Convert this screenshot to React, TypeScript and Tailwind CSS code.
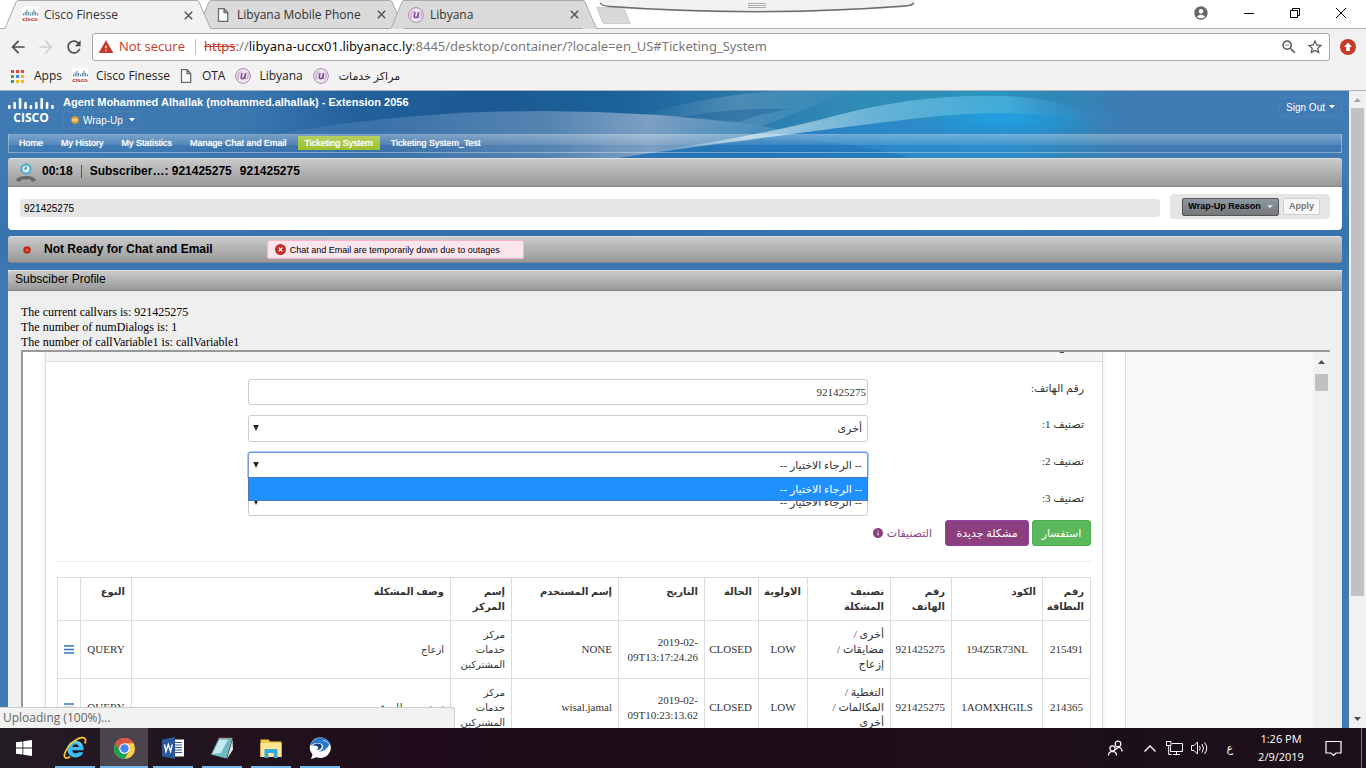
import React from "react";
import {
  MdAccountCircle,
  MdArrowBack,
  MdArrowForward,
  MdInfo,
  MdRefresh,
  MdStarBorder,
  MdWarning,
  MdZoomOut,
} from "react-icons/md";

const ui = "font-['Open_Sans','DejaVu_Sans',sans-serif]";
const sans = "font-['Liberation_Sans',Arial,sans-serif]";
const serif = "font-['Liberation_Serif','DejaVu_Sans',serif]";

/* ---------- small drawings ---------- */

function CiscoBars() {
  const bars = [
    [0, 8, 4],
    [1, 5, 7],
    [2, 1, 11],
    [3, 5, 7],
    [4, 8, 4],
    [5, 5, 7],
    [6, 1, 11],
    [7, 5, 7],
    [8, 8, 4],
  ];
  return (
    <g>
      {bars.map(([i, y, h]) => (
        <rect key={i} x={i * 5.4} y={y} width="2.6" height={h} rx="1" />
      ))}
    </g>
  );
}

function CiscoFavicon() {
  return (
    <span className={`flex size-4 shrink-0 flex-col items-center justify-center bg-white ${sans}`} aria-hidden="true">
      <svg viewBox="0 0 46 13" preserveAspectRatio="none" className="h-[7px] w-[15px] fill-[#2f6b86]">
        <CiscoBars />
      </svg>
      <span className="text-[6px] leading-[6px] font-bold text-[#a5182b]">cisco</span>
    </span>
  );
}

function LibyanaIcon() {
  return (
    <svg viewBox="0 0 16 16" className="size-4 shrink-0" fill="none" aria-hidden="true">
      <circle cx="8" cy="8" r="7.4" fill="#efe6f0" stroke="#a57fae" strokeWidth=".9" />
      <path d="M3.500 11.500C2.500 7.500 4 4.500 6 3.500" stroke="#cdb6d2" strokeWidth="1.8" />
      <path d="M7 5 6.200 9.200c-.3 1.800 2.600 1.800 3.400.2L10.600 5M10.300 7l-.6 4" stroke="#8a4f99" strokeWidth="1.700" />
      <path d="M12.800 4.600c.9 2 .5 5-1.300 6.900" stroke="#b994c2" />
    </svg>
  );
}

function PageIcon() {
  return (
    <svg viewBox="0 0 16 16" className="size-4 shrink-0" fill="#fbfbfb" stroke="#6b6b6b" strokeWidth="1.3" aria-hidden="true">
      <path d="M3.500 1.700h5.600l3.600 3.700v9H3.500zM9 1.700v3.800h3.700" />
    </svg>
  );
}

function AppsIcon() {
  const colors = ["#ea4335", "#ea4335", "#ea4335", "#34a853", "#4285f4", "#fbbc05", "#34a853", "#fbbc05", "#fbbc05"];
  return (
    <svg viewBox="0 0 13 13" className="size-[13px]" aria-hidden="true">
      {colors.map((c, i) => (
        <rect key={i} x={(i % 3) * 5} y={Math.floor(i / 3) * 5} width="3" height="3" fill={c} />
      ))}
    </svg>
  );
}

/* ---------- browser chrome ---------- */

function Tab({ title, icon, active = false }: { title: string; icon: React.ReactNode; active?: boolean }) {
  const fill = active ? "#f2f2f2" : "#dadada";
  return (
    <div className={`-mr-[13px] flex h-[29px] w-[206px] shrink-0 ${active ? "relative z-10" : ""}`}>
      <svg viewBox="0 0 13 29" className="h-full w-[13px] shrink-0" aria-hidden="true">
        <path d="M0 28.500 11 2Q11.600 .5 13 .5V29H0z" fill={fill} />
        <path d="M0 28.500 11 2Q11.600 .5 13 .5" fill="none" stroke="#a9a9a9" />
      </svg>
      <div
        className={`flex min-w-0 flex-1 items-center border-t border-[#a9a9a9] px-1 text-[12px] text-[#333] ${
          active ? "bg-[#f2f2f2]" : "border-b bg-[#dadada]"
        }`}
      >
        {icon}
        <span className="ml-1.5 flex-1 truncate">{title}</span>
        <button aria-label={`Close ${title}`}>
          <svg viewBox="0 0 9 9" className="size-[9px]" stroke="#5a5a5a" strokeWidth="1.6">
            <path d="m.8.8 7.400 7.400M8.200.8.8 8.200" />
          </svg>
        </button>
      </div>
      <svg viewBox="0 0 14 29" className="h-full w-[14px] shrink-0" aria-hidden="true">
        <path d="M0 .5Q1.400.5 2 2L13.500 28.500V29H0z" fill={fill} />
        <path d="M0 .5Q1.400.5 2 2L13.500 28.500" fill="none" stroke="#a9a9a9" />
      </svg>
    </div>
  );
}

function TabStrip() {
  return (
    <div className="relative flex h-[29px] shrink-0 border-b border-[#b1b1b1] bg-white pl-[5px]">
      <Tab title="Cisco Finesse" icon={<CiscoFavicon />} active />
      <Tab title="Libyana Mobile Phone" icon={<PageIcon />} />
      <Tab title="Libyana" icon={<LibyanaIcon />} />
      <button aria-label="New tab" className="mt-[7px] ml-3 h-[18px]">
        <svg viewBox="0 0 36 18" className="h-[18px] w-9">
          <path d="M.8.500h25.500q1.500 0 2 1.500l6 14.500H8.500q-1.500 0-2-1.500z" fill="#d8d8d8" stroke="#cdcdcd" />
        </svg>
      </button>
      <svg viewBox="0 0 316 15" className="absolute top-0 left-[599px] h-[15px] w-[316px]" aria-hidden="true">
        <path d="M0 0h316q-2 6-10 7Q158 18 10 7.500 2 6 0 0z" fill="#d0d0d0" />
        <path d="M0 0h316q-2 5-11 5.500Q158 16 11 6 2 5 0 0z" fill="#f2f2f2" />
        <path d="M1 3q2 3 10 3.500Q158 17 306 6q7-.5 9-3" fill="none" stroke="#6c6c6c" strokeWidth="1.300" />
        <path d="M149 3.500h18M149 5.500h18M149 7.500h18" stroke="#aaa" />
      </svg>
      <div className="ml-auto flex items-start pt-[5px] pr-5">
        <button aria-label="Account" className="mr-[35px]">
          <MdAccountCircle className="size-4 text-[#666]" />
        </button>
        <button aria-label="Minimize" className="mr-9">
          <svg viewBox="0 0 10 16" className="h-4 w-2.5" stroke="#000">
            <path d="M0 8.500h10" />
          </svg>
        </button>
        <button aria-label="Restore" className="mr-9">
          <svg viewBox="0 0 10 16" className="h-4 w-2.5" stroke="#000" fill="none">
            <path d="M.5 5.500h7v7h-7zM2.500 5.500v-2h7v7h-2" />
          </svg>
        </button>
        <button aria-label="Close window">
          <svg viewBox="0 0 10 16" className="h-4 w-2.5" stroke="#000" fill="none">
            <path d="m0 3 10 10M10 3 0 13" />
          </svg>
        </button>
      </div>
    </div>
  );
}

function Toolbar() {
  return (
    <div className="flex h-9 shrink-0 items-center bg-[#f2f2f2] pr-2.5 pl-2">
      <button aria-label="Back">
        <MdArrowBack className="size-5 text-[#4d4d4d]" />
      </button>
      <button aria-label="Forward" className="ml-2">
        <MdArrowForward className="size-5 text-[#cfcfcf]" />
      </button>
      <button aria-label="Reload" className="ml-2">
        <MdRefresh className="size-5 text-[#4d4d4d]" />
      </button>
      <div className="ml-2 flex h-7 min-w-0 flex-1 items-center rounded-[3px] border border-[#a9a9a9] bg-white px-[5px] text-[13px]">
        <MdWarning className="size-4 shrink-0 text-[#c53929]" />
        <span className="ml-[5px] text-[#c53929]">Not secure</span>
        <span className="mr-2 ml-2.5 h-4 w-px bg-[#c0c0c0]" />
        <div
          role="textbox"
          aria-label="Address"
          contentEditable
          suppressContentEditableWarning
          className="flex-1 truncate font-['Noto_Sans',sans-serif] text-[#777] outline-none"
        >
          <span className="text-[#c53929] line-through">https</span>://
          <span className="text-[#111]">libyana-uccx01.libyanacc.ly</span>:8445/desktop/container/?locale=en_US#Ticketing_System
        </div>
        <button aria-label="Zoom">
          <MdZoomOut className="size-[18px] text-[#555]" />
        </button>
        <button aria-label="Bookmark this page" className="ml-2">
          <MdStarBorder className="size-[18px] text-[#555]" />
        </button>
      </div>
      <button aria-label="Update" className="ml-2.5">
        <svg viewBox="0 0 16 16" className="size-4">
          <circle cx="8" cy="8" r="8" fill="#c53929" />
          <path d="m8 3.500 4 4.500H9.800v4H6.200V8H4z" fill="#fff" />
        </svg>
      </button>
    </div>
  );
}

function Bookmarks() {
  return (
    <nav className="flex h-[26px] shrink-0 items-center border-b border-[#b1b1b1] bg-[#f2f2f2] pb-[3px] pl-[11px] text-[12px] text-[#222]">
      <a href="#apps" className="flex items-center gap-2.5">
        <AppsIcon /> Apps
      </a>
      <a href="#finesse" className="ml-2.5 flex items-center gap-2">
        <CiscoFavicon /> Cisco Finesse
      </a>
      <a href="#ota" className="ml-2 flex items-center gap-2">
        <PageIcon /> OTA
      </a>
      <a href="#libyana" className="ml-2.5 flex items-center gap-2">
        <LibyanaIcon /> Libyana
      </a>
      <a href="#centers" className="ml-2.5 flex items-center gap-2.5">
        <LibyanaIcon /> <span className="text-[11px]">مراكز خدمات</span>
      </a>
    </nav>
  );
}

/* ---------- agent desktop ---------- */

function Banner() {
  return (
    <svg viewBox="0 0 1349 200" preserveAspectRatio="none" className="absolute inset-x-0 top-0 h-[200px] w-full" aria-hidden="true">
      <defs>
        <linearGradient id="base" x1="0" x2="1">
          <stop offset="0" stopColor="#407bb4" />
          <stop offset=".18" stopColor="#3c77b0" />
          <stop offset=".27" stopColor="#22609b" />
          <stop offset=".36" stopColor="#1b5993" />
          <stop offset=".46" stopColor="#1b6299" />
          <stop offset=".54" stopColor="#2876a8" />
          <stop offset=".62" stopColor="#3089b6" />
          <stop offset=".74" stopColor="#2b95bd" />
          <stop offset=".79" stopColor="#2f86b4" />
          <stop offset=".84" stopColor="#407bb4" />
        </linearGradient>
        <linearGradient id="haze" gradientUnits="userSpaceOnUse" x1="200" x2="900" y1="0" y2="0">
          <stop offset="0" stopColor="#3d77b0" />
          <stop offset=".25" stopColor="#3b72aa" />
          <stop offset=".5" stopColor="#5584b1" />
          <stop offset=".64" stopColor="#7c9fc3" />
          <stop offset=".8" stopColor="#4f93c0" stopOpacity=".8" />
          <stop offset="1" stopColor="#3a86c4" stopOpacity="0" />
        </linearGradient>
        <linearGradient id="veil" gradientUnits="userSpaceOnUse" x1="640" x2="840" y1="0" y2="0">
          <stop offset="0" stopColor="#5d93bb" stopOpacity="0" />
          <stop offset=".5" stopColor="#5d93bb" stopOpacity=".7" />
          <stop offset="1" stopColor="#4597bd" stopOpacity=".3" />
        </linearGradient>
        <linearGradient id="sweep" gradientUnits="userSpaceOnUse" x1="590" x2="1110" y1="0" y2="0">
          <stop offset="0" stopColor="#a9c3da" stopOpacity="0" />
          <stop offset=".3" stopColor="#b4d3e4" stopOpacity=".9" />
          <stop offset=".55" stopColor="#6db6d9" stopOpacity=".9" />
          <stop offset=".8" stopColor="#45b1dc" stopOpacity=".8" />
          <stop offset="1" stopColor="#407bb4" stopOpacity="0" />
        </linearGradient>
        <linearGradient id="deep" gradientUnits="userSpaceOnUse" x1="600" x2="1120" y1="0" y2="0">
          <stop offset="0" stopColor="#3a75b0" />
          <stop offset=".3" stopColor="#2a7cbc" />
          <stop offset=".6" stopColor="#2b8bca" />
          <stop offset=".8" stopColor="#2c8ccb" stopOpacity=".9" />
          <stop offset="1" stopColor="#407bb4" stopOpacity="0" />
        </linearGradient>
        <radialGradient id="glow">
          <stop offset="0" stopColor="#1fa2e6" />
          <stop offset=".5" stopColor="#2395d6" stopOpacity=".6" />
          <stop offset="1" stopColor="#407bb4" stopOpacity="0" />
        </radialGradient>
        <linearGradient id="fade" x2="0" y2="1">
          <stop offset=".35" stopColor="#3874ae" stopOpacity="0" />
          <stop offset=".75" stopColor="#3672ac" />
          <stop offset="1" stopColor="#407bb4" />
        </linearGradient>
      </defs>
      <rect width="1349" height="200" fill="url(#base)" />
      <path d="M600 34Q720 0 790 0h60l-90 36z" fill="url(#veil)" />
      <path d="M200 60Q360 20 544 20 650 20 755 34 830 45 900 70H200z" fill="url(#haze)" />
      <path d="M680 26q60-10 110-8-30 4-50 13z" fill="#1f659d" opacity=".5" />
      <path d="M600 70Q730 48 838 34q140-16 290 20V90H600z" fill="url(#deep)" />
      <path d="M748 48Q840 46 914 68V90H620V66z" fill="#2273b5" opacity=".6" />
      <ellipse cx="1005" cy="28" rx="125" ry="26" fill="url(#glow)" />
      <path d="M590 70Q755 47 838 24 920 3 1000 5q70 2 110 28-90-18-190-6-70 8-172 22-80 10-140 20z" fill="url(#sweep)" />
      <rect width="1349" height="200" fill="url(#fade)" />
    </svg>
  );
}

function DownCaret({ className = "" }: { className?: string }) {
  return (
    <svg viewBox="0 0 6 4" className={`h-1 w-1.5 ${className}`} fill="currentColor" aria-hidden="true">
      <path d="M0 0h6L3 3.500z" />
    </svg>
  );
}

function AgentHeader() {
  return (
    <header className="flex h-[43px] items-start text-white">
      <div className="mt-1.5 flex w-[46px] flex-col items-center">
        <svg viewBox="0 0 46 13" className="h-[13px] w-[46px] fill-white" aria-hidden="true">
          <CiscoBars />
        </svg>
        <span className="font-['Open_Sans',sans-serif] text-[12px] leading-[15px] font-bold">CISCO</span>
      </div>
      <div className="ml-[9px] pt-[5px]">
        <h1 className="text-[11px] leading-[13px] font-bold">Agent Mohammed Alhallak (mohammed.alhallak) - Extension 2056</h1>
        <button className="mt-0.5 flex h-[18px] w-[76px] items-center rounded border border-white/5 pl-[7px] text-[10px]">
          <svg viewBox="0 0 8 8" className="size-2" aria-hidden="true">
            <circle cx="4" cy="4" r="3.700" fill="#f0a21d" />
            <path d="M1.500 4h5" stroke="#fff3cf" strokeWidth="1.400" />
          </svg>
          <span className="ml-1">Wrap-Up</span>
          <DownCaret className="ml-1.5" />
        </button>
      </div>
      <button className="mt-1.5 ml-auto flex h-5 items-center gap-1 rounded border border-white/5 px-1.5 text-[10px]">
        Sign Out <DownCaret />
      </button>
    </header>
  );
}

const navItems = ["Home", "My History", "My Statistics", "Manage Chat and Email", "Ticketing System", "Ticketing System_Test"];

function MainNav() {
  return (
    <nav className="flex h-[19px] items-start border border-t-white/35 border-r-white/35 border-b-white/10 border-l-white/35 bg-gradient-to-b from-white/30 via-white/10 via-60% to-transparent to-60% pt-px pl-[3px] text-[9px] leading-[14px] text-white">
      {navItems.map((item) => (
        <a
          key={item}
          href="#"
          className={`mr-1 px-[7px] [text-shadow:0_0_1px_#fff] ${
            item === "Ticketing System" ? "bg-gradient-to-b from-[#b5d05f] to-[#9bbf25]" : ""
          }`}
        >
          {item}
        </a>
      ))}
    </nav>
  );
}

const bar = "flex items-center border-t border-b border-t-[#dedede] border-b-[#858585] bg-gradient-to-b from-[#cacaca] to-[#999] text-black";

function CallPanel() {
  return (
    <section className="mt-[5px]">
      <div className={`${bar} h-[29px] rounded-t-[3px] pb-[3px] pl-2 text-[12px] font-bold`}>
        <svg viewBox="0 0 20 20" className="mt-[3px] size-5" aria-hidden="true">
          <circle cx="10" cy="6" r="4.600" fill="#d4eef5" stroke="#4fb0cc" strokeWidth="2.200" />
          <path d="M10 3.500V6H8.500" stroke="#444" fill="none" />
          <path d="M0 17.500Q1 13 10 13t10 4.500l-4 1.500-1.500-2.500h-9L4 19z" fill="#686868" />
        </svg>
        <span className="ml-1.5">00:18</span>
        <span className="ml-2 h-[13px] w-px bg-[#555]" />
        <span className="ml-2">Subscriber…: 921425275</span>
        <span className="ml-2">921425275</span>
      </div>
      <div className="flex h-[43px] items-start rounded-b bg-white px-3 pt-[7px]">
        <input
          aria-label="Call variable"
          defaultValue="921425275"
          className="mt-[5px] h-[18px] min-w-0 flex-1 rounded bg-[#e5e5e5] px-1 pt-px text-[10px] text-black"
        />
        <div className="ml-2.5 flex h-[25px] items-center rounded bg-[#e5e5e5] pr-2.5 pl-3 text-[9px] font-bold">
          <button className="flex h-[18px] w-[97px] items-center justify-center gap-1.5 rounded-xs border border-[#555] bg-gradient-to-b from-[#8b98a5] to-[#777] text-black">
            Wrap-Up Reason
            <DownCaret className="text-[#ccd9e8]" />
          </button>
          <button disabled className="ml-1 h-[17px] w-[37px] rounded-xs border border-[#cfcfcf] bg-[#f6f6f6] text-[#777]">
            Apply
          </button>
        </div>
      </div>
    </section>
  );
}

function ChatBar() {
  return (
    <section className={`${bar} mt-1.5 h-[27px] rounded-[3px] pl-[15px]`}>
      <svg viewBox="0 0 8 8" className="size-2" aria-hidden="true">
        <circle cx="4" cy="4" r="3.700" fill="#bd2a18" />
        <circle cx="4" cy="4" r="1.500" fill="#e8604a" />
      </svg>
      <span className="ml-[13px] pb-0.5 text-[12px] font-bold">Not Ready for Chat and Email</span>
      <div role="alert" className="ml-[54px] flex h-[19px] w-[257px] items-center rounded-xs border border-[#fbb3c8] bg-[#fbe6ee] pl-[7px] text-[9px]">
        <svg viewBox="0 0 12 12" className="size-[11px]" aria-hidden="true">
          <circle cx="6" cy="6" r="6" fill="#c0312b" />
          <path d="m4 4 4 4m0-4L4 8" stroke="#fff" strokeWidth="1.400" />
        </svg>
        <span className="ml-1 pt-0.5">Chat and Email are temporarily down due to outages</span>
      </div>
    </section>
  );
}

/* ---------- ticketing form ---------- */

function SelectField({ id, label, value, open = false }: { id: string; label: string; value: string; open?: boolean }) {
  return (
    <div className="flex items-start">
      <label htmlFor={id} className="w-[216px] shrink-0 leading-[19px]">
        {label}
      </label>
      <div className="relative flex-1">
        <select
          id={id}
          defaultValue={value}
          className={`block h-[27px] w-full appearance-none rounded-[3px] border bg-white px-[5px] leading-[19px] ${
            open ? "border-[#6f9bdc] ring-1 ring-[#a9c9f7]" : "border-[#ccc]"
          }`}
        >
          <option value={value}>{value}</option>
        </select>
        <svg viewBox="0 0 6 7" className="pointer-events-none absolute top-2.5 left-[5px] h-[7px] w-1.5" aria-hidden="true">
          <path d="M.2 0h5.600L3 6z" fill="#222" />
        </svg>
        {open && (
          <ul role="listbox" aria-label={label} className="absolute top-[25px] right-0 left-0 z-10 border border-[#4b79b5] bg-[#1e90ff] text-white">
            <li role="option" aria-selected="true" className="h-[22px] px-[5px] leading-[22px]">
              {value}
            </li>
          </ul>
        )}
      </div>
    </div>
  );
}

const choose = "-- الرجاء الاختيار --";

function TicketForm() {
  return (
    <form className="flex flex-col gap-2.5 pt-[17px] pr-[18px] pl-[202px]" onSubmit={(e) => e.preventDefault()}>
      <div className="flex items-start">
        <label htmlFor="phone" className="w-[216px] shrink-0 leading-[19px]">
          رقم الهاتف:
        </label>
        <input id="phone" defaultValue="921425275" className="h-[26px] min-w-0 flex-1 rounded-[3px] border border-[#ccc] px-px text-[11px]" />
      </div>
      <SelectField id="class1" label="تصنيف 1:" value="أخرى" />
      <SelectField id="class2" label="تصنيف 2:" value={choose} open />
      <SelectField id="class3" label="تصنيف 3:" value={choose} />
    </form>
  );
}

type Ticket = {
  id: string;
  code: string;
  phone: string;
  category: string[];
  date: string[];
  user: string;
  description: string;
};

const tickets: Ticket[] = [
  {
    id: "215491",
    code: "194Z5R73NL",
    phone: "921425275",
    category: ["أخرى /", "مضايقات /", "إزعاج"],
    date: ["2019-02-", "09T13:17:24.26"],
    user: "NONE",
    description: "ازعاج",
  },
  {
    id: "214365",
    code: "1AOMXHGILS",
    phone: "921425275",
    category: ["التغطية /", "المكالمات /", "أخرى"],
    date: ["2019-02-", "09T10:23:13.62"],
    user: "wisal.jamal",
    description: "تم توجيهه للموقع",
  },
];

const td = "border border-[#ddd] px-1.5 py-1.5";

function Lines({ items }: { items: string[] }) {
  return (
    <>
      {items.map((t) => (
        <div key={t} className="whitespace-nowrap">
          {t}
        </div>
      ))}
    </>
  );
}

function TicketTable() {
  const th = `${td} text-right align-top font-bold text-[10px]`;
  return (
    <table className="mt-[15px] w-full table-fixed border-collapse text-[11px] leading-[15px]">
      <colgroup>
        <col className="w-12" />
        <col className="w-[91px]" />
        <col className="w-[61px]" />
        <col className="w-[83px]" />
        <col className="w-[49px]" />
        <col className="w-[54px]" />
        <col className="w-[86px]" />
        <col className="w-[107px]" />
        <col className="w-[61px]" />
        <col />
        <col className="w-[51px]" />
        <col className="w-[23px]" />
      </colgroup>
      <thead>
        <tr>
          <th className={th}><Lines items={["رقم", "البطاقة"]} /></th>
          <th className={th}>الكود</th>
          <th className={th}><Lines items={["رقم", "الهاتف"]} /></th>
          <th className={th}><Lines items={["تصنيف", "المشكلة"]} /></th>
          <th className={th}>الاولوية</th>
          <th className={th}>الحالة</th>
          <th className={th}>التاريخ</th>
          <th className={th}>إسم المستخدم</th>
          <th className={th}><Lines items={["إسم", "المركز"]} /></th>
          <th className={th}>وصف المشكلة</th>
          <th className={th}>النوع</th>
          <th className={td} aria-label="القائمة" />
        </tr>
      </thead>
      <tbody>
        {tickets.map((t) => (
          <tr key={t.id}>
            <td className={`${td} text-center`}>{t.id}</td>
            <td className={`${td} text-center`}>{t.code}</td>
            <td className={`${td} text-center`}>{t.phone}</td>
            <td className={td}><Lines items={t.category} /></td>
            <td className={`${td} text-center`}>LOW</td>
            <td className={`${td} text-center`}>CLOSED</td>
            <td className={td}><bdi dir="ltr" className="block text-right"><Lines items={t.date} /></bdi></td>
            <td className={td}>{t.user}</td>
            <td className={`${td} text-[10px]`}><Lines items={["مركز", "خدمات", "المشتركين"]} /></td>
            <td className={`${td} text-[10px]`}>{t.description}</td>
            <td className={`${td} text-center`}>QUERY</td>
            <td className={`${td} text-center`}>
              <button aria-label="التفاصيل" className="block">
                <svg viewBox="0 0 10 9" className="h-[9px] w-2.5" stroke="#337ab7" strokeWidth="1.300">
                  <path d="M0 1h10M0 4.500h10M0 8h10" />
                </svg>
              </button>
            </td>
          </tr>
        ))}
      </tbody>
    </table>
  );
}

function UpArrow({ color }: { color: string }) {
  return (
    <svg viewBox="0 0 7 4" className="h-1 w-[7px]" fill={color} aria-hidden="true">
      <path d="M0 4h7L3.500 0z" />
    </svg>
  );
}

function TicketFrame() {
  return (
    <div className={`mr-3 ml-[13px] flex min-h-0 flex-1 overflow-hidden border-t-2 border-l-2 border-[#999] bg-white text-[11px] text-[#333] ${serif}`}>
      <div className="flex min-w-0 flex-1">
        <div dir="rtl" className="mx-[22px] min-w-0 flex-1 border-x border-[#ddd] shadow-[0_0_3px_#ddd]">
          <div className="flex h-2.5 items-end border-b border-[#ddd] bg-[#f5f5f5] pr-[38px] leading-[18px]">
            <span className="mb-1.5">ع</span>
          </div>
          <TicketForm />
          <div className="mt-1 flex items-center pr-[11px]">
            <button className="h-[26px] w-[59px] rounded-[3px] border border-[#4cae4c] bg-[#5cb85c] text-white">استفسار</button>
            <button className="mr-[3px] h-[26px] w-[84px] rounded-[3px] border border-[#8e44ad] bg-[#8c3f7f] text-white">مشكلة جديدة</button>
            <a href="#classes" className="mr-[13px] flex items-center gap-[3px] text-[#8c3f7f]">
              التصنيفات <MdInfo className="size-3" />
            </a>
          </div>
          <div className="mx-[11px] mt-[15px] border-t border-[#eee]">
            <TicketTable />
          </div>
        </div>
        <div className="w-[188px] shrink-0 border-l border-[#ddd] bg-[#f8f8f8]" />
      </div>
      <div className="flex w-[17px] shrink-0 flex-col items-center bg-[#f1f1f1] pt-2" aria-hidden="true">
        <UpArrow color="#505050" />
        <div className="mt-2.5 h-[17px] w-[13px] bg-[#c1c1c1]" />
      </div>
    </div>
  );
}

function ProfileGadget() {
  return (
    <section className="mt-[7px] flex min-h-0 flex-1 flex-col bg-[#efefef]">
      <h2 className={`${bar} h-[21px] shrink-0 rounded-t-[3px] pb-[3px] pl-[7px] text-[12px]`}>Subsciber Profile</h2>
      <div className={`mt-3.5 shrink-0 pl-[13px] text-[12px] leading-[15px] text-black ${serif}`}>
        <p>The current callvars is: 921425275</p>
        <p>The number of numDialogs is: 1</p>
        <p>The number of callVariable1 is: callVariable1</p>
      </div>
      <div className="flex min-h-0 flex-1">
        <TicketFrame />
      </div>
    </section>
  );
}

/* ---------- taskbar ---------- */

function TaskButton({ label, active = false, children }: { label: string; active?: boolean; children: React.ReactNode }) {
  return (
    <button aria-label={label} className={`relative mr-px flex h-10 w-12 items-center justify-center ${active ? "bg-[#4c454d]" : ""}`}>
      {children}
      <span className={`absolute bottom-0 h-0.5 bg-[#76b9ed] ${active ? "inset-x-0" : "inset-x-1"}`} />
    </button>
  );
}

function Taskbar() {
  return (
    <footer className={`flex h-10 shrink-0 items-center bg-gradient-to-r from-[#241c25] via-[#200c1a] via-30% to-[#1c1019] text-white ${ui}`}>
      <div className="flex">
        <button aria-label="Start" className="mr-[3px] flex h-10 w-12 items-center justify-center">
          <svg viewBox="0 0 16 16" className="size-4" fill="#fff">
            <path d="m0 2.300 6.500-.9v6.200H0zM7.300 1.300 16 0v7.600H7.300zM0 8.400h6.500v6.200L0 13.700zM7.300 8.400H16V16l-8.700-1.300z" />
          </svg>
        </button>
        <TaskButton label="Internet Explorer">
          <svg viewBox="0 0 24 24" className="size-6" fill="none">
            <path d="M20.300 16.200c-1.200 3.400-4.100 5.200-7.700 5.200-5 0-8.400-3.500-8.400-8.300 0-4.600 3.500-8.300 8.400-8.300 5 0 8.200 3.700 8 9.400H9.300c.3 2.200 1.500 3.200 3.500 3.200 1.300 0 2.300-.5 2.800-1.200zM9.400 10.900h6.300c-.2-1.700-1.300-2.700-3.100-2.700-1.700 0-2.800 1-3.200 2.700z" fill="#3cbdf3" fillRule="evenodd" />
            <path d="M5.500 10.500Q8 5.600 12.600 5.600q4.400 0 6.400 4" stroke="#9be3fb" strokeWidth="1" />
            <path d="M21.800 7.500C23.500 3.500 22.300 1 18.500 1.700 11 3.200 3 12 1.500 18.500c-.8 3.800 2 4.500 5.700 2.300" stroke="#f7c62b" strokeWidth="1.700" />
          </svg>
        </TaskButton>
        <TaskButton label="Chrome" active>
          <svg viewBox="0 0 24 24" className="size-[23px]">
            <circle cx="12" cy="12" r="11" fill="#ffcd42" />
            <path d="M2.500 6.500A11 11 0 0 1 21.500 6.500H12L7.200 14.800z" fill="#de5347" />
            <path d="M2.500 6.500 7.240 14.750Q9 17.500 12 17.500L16.760 14.750 12 23A11 11 0 0 1 2.500 6.500z" fill="#1a9f5d" />
            <circle cx="12" cy="12" r="5.500" fill="#fff" />
            <circle cx="12" cy="12" r="4.400" fill="#4486f5" />
          </svg>
        </TaskButton>
        <TaskButton label="Word">
          <svg viewBox="0 0 24 24" className="size-6">
            <path d="M12 3.500h11v17H12z" fill="#fff" />
            <path d="M14 6.500h7M14 9h7M14 11.500h7M14 14h7M14 16.500h7" stroke="#2b579a" />
            <path d="M1 3.500 14 1v22L1 20.500z" fill="#2b579a" />
            <path d="m3.500 8.500 1.500 7 2.300-7 2.300 7 1.600-7" stroke="#fff" strokeWidth="1.400" fill="none" />
          </svg>
        </TaskButton>
        <TaskButton label="Notepad">
          <svg viewBox="0 0 24 24" className="size-6">
            <path d="M8.500 3h13.700l-5.700 19.500L1 18.500z" fill="#6fb9c6" />
            <path d="M9.500 3.500H18L11 17 2.500 18z" fill="#c4eaf0" />
            <path d="m22.500 3.500.5 10-6 9.500z" fill="#e9e7dc" />
            <path d="M8.500 2.500h14" stroke="#999" strokeWidth="1.500" />
          </svg>
        </TaskButton>
        <TaskButton label="File Explorer">
          <svg viewBox="0 0 24 24" className="size-6">
            <path d="M1.500 3.500h8l1.500 2h11.500v15.500h-21z" fill="#f5c945" />
            <path d="M1.500 7h21v14h-21z" fill="#ffe594" />
            <path d="M5.500 22v-9h13v9h-3.700v-5H9.300v5z" fill="#35abe4" />
          </svg>
        </TaskButton>
        <TaskButton label="Jabber">
          <svg viewBox="0 0 24 24" className="size-6">
            <path d="M12.500 1.500A10.500 10.200 0 1 1 8.500 21.200L3 23l1.500-4.500A10.300 10.200 0 0 1 12.500 1.500z" fill="#fff" />
            <path d="M2.600 9.500C3.500 4.500 8 1.500 12.500 1.500c4 0 7.500 2 9.300 5.500-1.300 5-5.800 8.500-11.300 8.800 3.500-1.500 5-4 4.500-6C14.200 6.500 8 5.500 2.600 9.500z" fill="#2b78c9" />
            <path d="M4 9.500q5-3 8.500-1.300 2.500 1.800.3 4.300-1.500 1.500-4.300 1.700Q11.300 12 9.700 10.500 8 9.200 4 9.500z" fill="#123f86" />
            <path d="M15 4.500q4 0 5.500 3" stroke="#a8d0f2" fill="none" />
          </svg>
        </TaskButton>
      </div>
      <div className="ml-auto flex h-full items-center">
        <svg viewBox="0 0 16 16" className="size-4" fill="none" stroke="#fff" strokeWidth="1.200" aria-label="People">
          <circle cx="11" cy="4" r="2.800" />
          <path d="M8.500 9.500q5-5 6.800 2" />
          <circle cx="5.500" cy="8.500" r="2.600" />
          <path d="M1.500 15.500q0-4 4-4.200 4 .2 4 4.200" />
        </svg>
        <svg viewBox="0 0 12 7" className="ml-[21px] h-[7px] w-3" fill="none" stroke="#fff" strokeWidth="1.300" aria-label="Hidden icons">
          <path d="m.5 6.500 5.500-5.500 5.500 5.500" />
        </svg>
        <svg viewBox="0 0 17 16" className="ml-2.5 h-4 w-[17px]" fill="none" stroke="#fff" aria-label="Network">
          <path d="M6 3.500h10.500v8H4.500v-5M7 14.500h7M10.500 11.500v3M.5 1.500h4.500v4H.5zM2.700 5.500v9h3" />
        </svg>
        <svg viewBox="0 0 17 16" className="ml-2 h-4 w-[17px]" fill="none" stroke="#fff" aria-label="Volume">
          <path d="M.5 5.500h2.500l3.500-3.500v12L3 10.500H.5zM8.500 6q1.500 2 0 4.500M11 4q3 4 0 8.500M13.500 2.500q4.500 5.500 0 11.500" />
        </svg>
        <span className="ml-[18px] text-[11px]">ع</span>
        <div className="ml-4 w-16 text-center text-[11px] leading-[18px]">
          <div>1:26 PM</div>
          <div>2/9/2019</div>
        </div>
        <svg viewBox="0 0 17 17" className="ml-3 size-[17px]" fill="none" stroke="#fff" strokeWidth="1.200" aria-label="Notifications">
          <path d="M1 1.500h15v11.500h-5L8.500 15.500 6 13H1z" />
        </svg>
        <span className="ml-[19px] h-full w-[5px] border-l border-[#777]" />
      </div>
    </footer>
  );
}

export default function App() {
  return (
    <div className={`flex h-screen flex-col overflow-hidden ${ui}`}>
      <TabStrip />
      <Toolbar />
      <Bookmarks />
      <main className="relative flex min-h-0 flex-1">
        <div className={`relative flex min-w-0 flex-1 flex-col bg-[#407bb4] ${sans}`}>
          <Banner />
          <div className="relative flex min-h-0 flex-1 flex-col pr-[7px] pl-2">
            <AgentHeader />
            <MainNav />
            <CallPanel />
            <ChatBar />
            <ProfileGadget />
          </div>
        </div>
        <div className="flex w-[17px] shrink-0 flex-col items-center bg-[#f1f1f1] py-[7px]" aria-hidden="true">
          <UpArrow color="#a3a3a3" />
          <div className="mt-1.5 w-[13px] flex-1 bg-[#c1c1c1]" />
          <div className="flex flex-[0_0_20%] flex-col justify-end">
            <span className="rotate-180">
              <UpArrow color="#505050" />
            </span>
          </div>
        </div>
        <div role="status" className="absolute bottom-0 left-0 z-20 flex h-[21px] w-1/3 items-center rounded-tr-[3px] border-t border-r border-[#ccc] bg-[#f2f2f2] pl-[3px] text-[12px] text-[#666]">
          Uploading (100%)...
        </div>
      </main>
      <Taskbar />
    </div>
  );
}
